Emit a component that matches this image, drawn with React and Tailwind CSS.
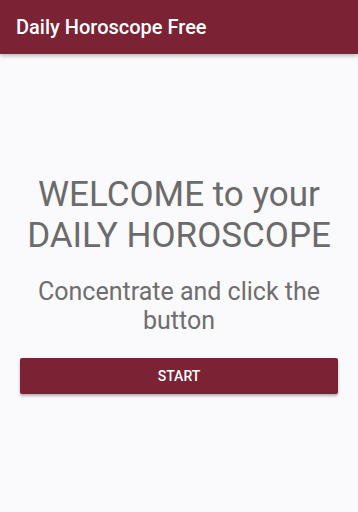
import React from "react";

export default function App() {
  return (
    <div className="w-[358px] h-[512px] bg-[#faf9fb] flex flex-col font-['Roboto',sans-serif]">
      <header className="h-[54px] bg-[#7b2234] flex items-center px-4 shadow-[0_2px_4px_rgba(0,0,0,0.25)] shrink-0">
        <h1 className="text-white text-[20px] font-medium">Daily Horoscope Free</h1>
      </header>
      <main className="flex flex-col items-center pt-[120px] px-5">
        <h2 className="text-center text-[#6b6b6b] text-[35px] leading-[41px] whitespace-nowrap">
          WELCOME to your
          <br />
          DAILY HOROSCOPE
        </h2>
        <p className="mt-[21px] text-center text-[#6e6e6e] text-[25px] leading-[29px] whitespace-nowrap">
          Concentrate and click the
          <br />
          button
        </p>
        <button className="mt-[23px] w-full h-[36px] bg-[#7b2234] rounded-[2px] text-white text-sm font-medium uppercase shadow-[0_2px_3px_rgba(0,0,0,0.3)]">
          Start
        </button>
      </main>
    </div>
  );
}
